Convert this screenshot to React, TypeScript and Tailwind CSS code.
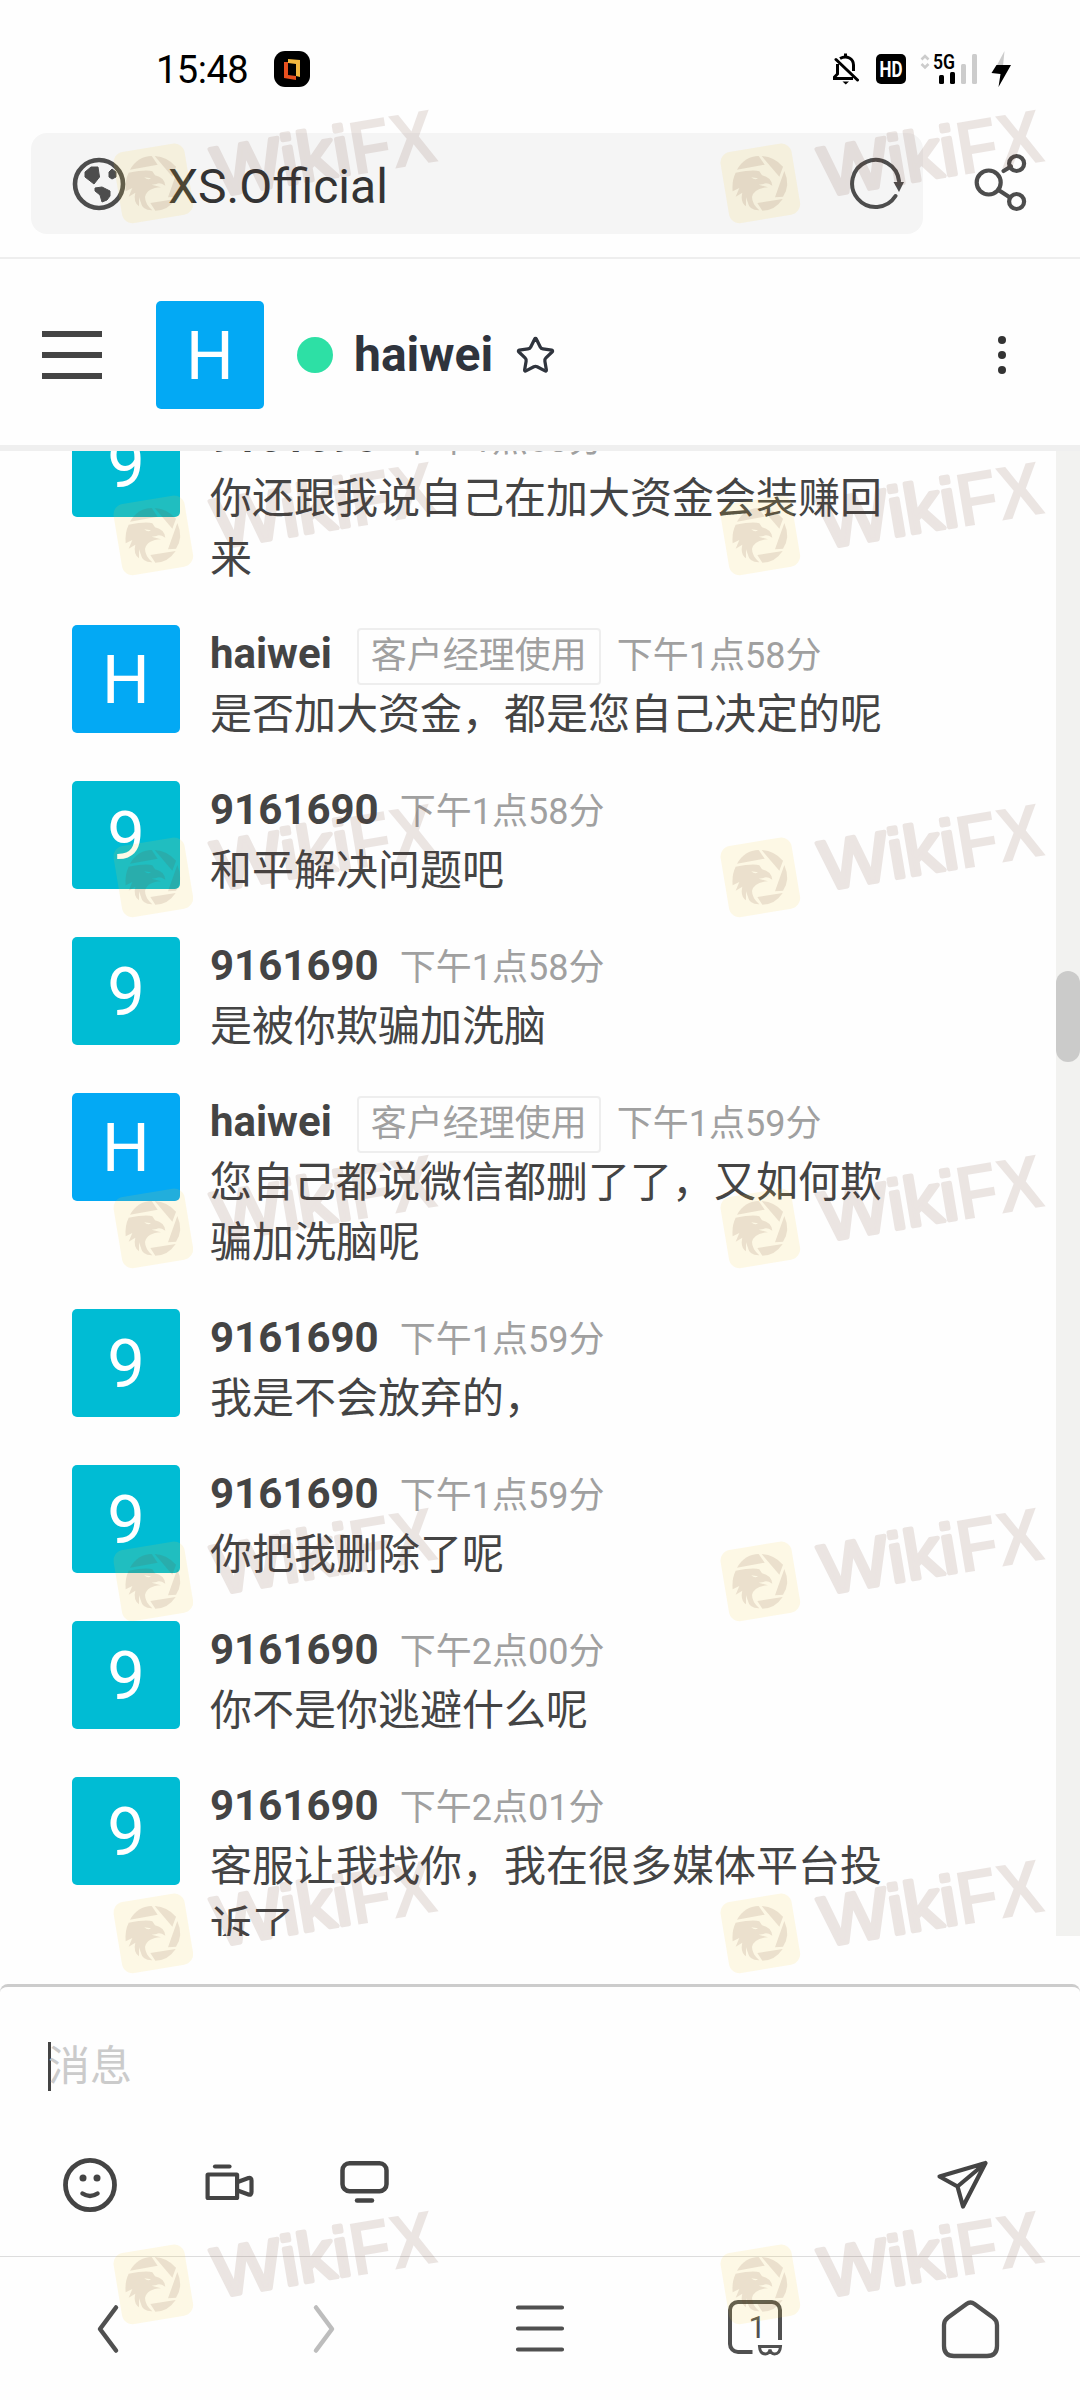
import React from "react";
import { Star } from "lucide-react";
import { clsx } from "clsx";

interface Message {
  id: string;
  author: string;
  role?: string;
  time: string;
  text: string;
}

const MESSAGES: Message[] = [
  { id: "m1", author: "9161690", time: "下午1点58分", text: "你还跟我说自己在加大资金会装赚回来" },
  { id: "m2", author: "haiwei", role: "客户经理使用", time: "下午1点58分", text: "是否加大资金，都是您自己决定的呢" },
  { id: "m3", author: "9161690", time: "下午1点58分", text: "和平解决问题吧" },
  { id: "m4", author: "9161690", time: "下午1点58分", text: "是被你欺骗加洗脑" },
  { id: "m5", author: "haiwei", role: "客户经理使用", time: "下午1点59分", text: "您自己都说微信都删了了，又如何欺骗加洗脑呢" },
  { id: "m6", author: "9161690", time: "下午1点59分", text: "我是不会放弃的，" },
  { id: "m7", author: "9161690", time: "下午1点59分", text: "你把我删除了呢" },
  { id: "m8", author: "9161690", time: "下午2点00分", text: "你不是你逃避什么呢" },
  { id: "m9", author: "9161690", time: "下午2点01分", text: "客服让我找你，我在很多媒体平台投诉了" },
];

const WATERMARK_ROWS = [102, 454, 796, 1147, 1500, 1852, 2203];
const WATERMARK_COLS = [92.5, 700];

function Avatar({ name }: { name: string }) {
  const letter = name[0].toUpperCase();
  return (
    <div
      className={clsx(
        "flex size-[108px] shrink-0 items-center justify-center rounded-[5px] pt-[2px] text-[67px] leading-none text-white",
        letter === "H" ? "bg-[#03a9f4]" : "bg-[#00bcd4]"
      )}
    >
      {letter}
    </div>
  );
}

function StatusBar() {
  return (
    <div className="flex h-[133px] shrink-0 items-center pt-[5px] pl-[156px] pr-[68px] text-black">
      <span className="w-[118px] pt-[1px] text-[38px] leading-none tracking-[-0.5px]">15:48</span>
      <svg width="36" height="36" viewBox="0 0 36 36">
        <rect width="36" height="36" rx="11" fill="#000" />
        <path d="M14 8 L26 9 V26 L22 25 V13 L14 12 Z" fill="#f3b73f" />
        <path d="M10 11 H14 V24 L22 25 V29 L10 27 Z" fill="#e8501f" />
      </svg>
      <svg className="ml-auto" width="27" height="32" viewBox="0 0 27 32" fill="none" stroke="#000" strokeWidth="3">
        <path d="M13.5 0.5 V4 M8 5.5 C15 1.5 21.5 6 21.5 12 V18 M5.5 11 V21 L2.5 24 V25.5 H21" />
        <path d="M4 6.5 L25.5 27" strokeLinecap="round" />
        <path d="M10.5 28.5 H17 L13.8 31.5 Z" fill="#000" stroke="none" />
      </svg>
      <svg className="ml-[17px] overflow-visible" width="30" height="30" viewBox="0 0 30 30">
        <rect width="30" height="30" rx="5" fill="#000" />
        <text x="3.5" y="23" fill="#fff" fontSize="22" fontWeight="700" textLength="23" lengthAdjust="spacingAndGlyphs">HD</text>
      </svg>
      <svg className="ml-[14px] overflow-visible" width="58" height="32" viewBox="0 0 58 32">
        <path d="M1.5 6.5 L5 3 L8.5 6.5 M1.5 11 L5 14.5 L8.5 11" fill="none" stroke="#ccc" strokeWidth="2.6" />
        <text x="13" y="16" fontSize="20" fontWeight="600" textLength="22" lengthAdjust="spacingAndGlyphs">5G</text>
        <rect x="19" y="22" width="5" height="9" rx="1.5" />
        <rect x="30" y="19" width="5" height="12" rx="1.5" />
        <rect x="41" y="11" width="5" height="20" rx="1.5" fill="#ccc" />
        <rect x="52" y="1" width="5" height="30" rx="1.5" fill="#ccc" />
      </svg>
      <svg className="ml-[13px]" width="21" height="36" viewBox="0 0 21 36">
        <path d="M13.5 0 L12 15 H5.5 Z" fill="#ccc" />
        <path d="M5.5 14 H20 L7.5 36 L9.5 23 L0.5 22 Z" fill="#000" />
      </svg>
    </div>
  );
}

function AddressBar() {
  return (
    <div className="flex h-[126px] shrink-0 items-start border-b-2 border-[#eeeeee] pl-[31px]">
      <div className="flex h-[101px] w-[892px] items-center rounded-[16px] bg-[#f5f5f5] pl-[41px] pr-[19px]">
        <svg width="54" height="54" viewBox="0 0 54 54">
          <circle cx="27" cy="27" r="24" fill="none" stroke="#4d4d4d" strokeWidth="4.6" />
          <g fill="#4d4d4d" stroke="#4d4d4d" strokeLinejoin="round">
            <path d="M13 15 L19 10 L26 10 L27.5 20 L22 27 L13 20 Z" />
            <path d="M23 31 L30 30 L38 34 L38 39 L35 43 L30 45 L28 38 L23 34 Z" />
            <path d="M37 15 L40 12 L44 15 L44 20 L40 22 L37 20 Z" />
          </g>
        </svg>
        <span className="ml-[42px] pt-[6px] text-[48px] leading-none text-[#333333]">XS.Official</span>
        <svg className="ml-auto" width="54" height="54" viewBox="0 0 54 54">
          <path d="M45.5 39 A23.5 23.5 0 1 1 49 24" fill="none" stroke="#4d4d4d" strokeWidth="4" strokeLinecap="round" />
          <path d="M43.5 25 H54 L49 35 Z" fill="#4d4d4d" />
        </svg>
      </div>
      <svg className="ml-[51px] mt-[19px]" width="54" height="60" viewBox="0 0 54 60" fill="none" stroke="#4d4d4d" strokeWidth="4.2">
        <circle cx="14.7" cy="30.5" r="12" />
        <circle cx="42.6" cy="11.5" r="7.5" />
        <circle cx="42.6" cy="49.5" r="7.5" />
        <path d="M29.5 19 L37 14.5 M24.5 38 L36 45.5" strokeLinecap="round" />
      </svg>
    </div>
  );
}

function ChatHeader() {
  return (
    <header className="flex h-[192px] shrink-0 items-center border-b-[6px] border-[#efefef] pl-[42px] pr-[74px] pt-[6px]">
      <div className="flex w-[60px] flex-col gap-[15px]">
        <div className="h-[6px] bg-[#444444]" />
        <div className="h-[6px] bg-[#444444]" />
        <div className="h-[6px] bg-[#444444]" />
      </div>
      <div className="ml-[54px]">
        <Avatar name="haiwei" />
      </div>
      <div className="ml-[33px] size-[36px] rounded-full bg-[#2de0a5]" />
      <h1 className="ml-[21px] text-[48px] font-bold leading-none text-[#2f343d]">haiwei</h1>
      <Star className="ml-[22px] text-[#2f343d]" size={41} strokeWidth={1.9} />
      <div className="ml-auto flex flex-col gap-[7px]">
        <div className="size-2 rounded-full bg-[#333333]" />
        <div className="size-2 rounded-full bg-[#333333]" />
        <div className="size-2 rounded-full bg-[#333333]" />
      </div>
    </header>
  );
}

function MessageRow({ author, role, time, text }: Message) {
  return (
    <li className="flex pb-[18px] pt-[18px]">
      <Avatar name={author} />
      <div className="ml-[30px] w-[690px]">
        <div className="flex h-[60px] items-baseline whitespace-nowrap text-[36px] text-[#a0a0a0]">
          <span className="text-[42px] font-bold leading-[58px] text-[#444444]">{author}</span>
          {role && (
            <span className="ml-[25px] rounded-[4px] border-2 border-[#eeeeee] px-3 leading-[53px]">
              {role}
            </span>
          )}
          <span className={clsx("leading-[58px]", role ? "ml-4" : "ml-[21px]")}>{time}</span>
        </div>
        <p className="text-[42px] leading-[60px] text-[#444444]">{text}</p>
      </div>
    </li>
  );
}

function MessageList() {
  return (
    <div className="flex h-[1485px] shrink-0 overflow-hidden">
      <ul className="-mt-[60px] flex-1 pl-[72px]">
        {MESSAGES.map((message) => (
          <MessageRow key={message.id} {...message} />
        ))}
      </ul>
      <div className="w-6 bg-[#f2f2f0] pt-[520px]">
        <div className="h-[91px] rounded-full bg-[#cbcbca]" />
      </div>
    </div>
  );
}

function Composer() {
  return (
    <div className="mt-12 flex h-[272px] shrink-0 flex-col rounded-t-[8px] border-t-[3px] border-[#cccccc] pt-[55px]">
      <div className="flex h-[49px] items-center pl-12">
        <div className="h-[49px] w-[3px] bg-[#444444]" />
        <span className="-ml-[3px] text-[42px] leading-[49px] text-[#cbcbcb]">消息</span>
      </div>
      <div className="mt-[65px] flex items-start pl-[63px] pr-[89px] text-[#444444]">
        <svg width="54" height="58" viewBox="0 0 54 58" fill="none" stroke="currentColor">
          <ellipse cx="27" cy="29" rx="24.5" ry="24.7" strokeWidth="4.8" />
          <circle cx="20" cy="22" r="3.5" fill="currentColor" stroke="none" />
          <circle cx="34" cy="22" r="3.5" fill="currentColor" stroke="none" />
          <path d="M19.5 37.5 Q27 42.5 34.5 37.5" strokeWidth="4.5" strokeLinecap="round" />
        </svg>
        <svg className="ml-[86px] mt-[6px]" width="54" height="42" viewBox="0 0 54 42" fill="none" stroke="currentColor" strokeWidth="4.2" strokeLinecap="round" strokeLinejoin="round">
          <path d="M12 4.5 H26.5" />
          <rect x="4.6" y="12.5" width="29.5" height="23.5" rx="0.5" />
          <path d="M36 19.5 L45.5 16 Q48.5 15.5 48.5 18.5 V30 Q48.5 33.5 45.5 32.5 L36 29" />
        </svg>
        <svg className="ml-[81px] mt-[3px]" width="54" height="48" viewBox="0 0 54 48" fill="none" stroke="currentColor" strokeWidth="4.5" strokeLinecap="round">
          <rect x="4.5" y="4.2" width="44" height="28" rx="7" />
          <path d="M19 41.5 H34" />
        </svg>
        <svg className="ml-auto mt-[3px]" width="56" height="52" viewBox="0 0 56 52" fill="none" stroke="currentColor" strokeWidth="4.2" strokeLinecap="round" strokeLinejoin="round">
          <path d="M50.5 4 L4.5 17.5 L22.5 27.5 L28 47.5 Z L22.5 27.5" />
        </svg>
      </div>
    </div>
  );
}

function BrowserNav() {
  return (
    <nav className="flex h-[144px] shrink-0 items-center border-t border-[#dddddd] text-[#505050]">
      <div className="flex flex-1 justify-center">
        <svg width="24" height="52" viewBox="0 0 24 52" fill="none" stroke="currentColor" strokeWidth="4.5" strokeLinecap="round" strokeLinejoin="round">
          <path d="M20 4.5 L4 26 L20 47.5" />
        </svg>
      </div>
      <div className="flex flex-1 justify-center text-[#bdbdbd]">
        <svg width="24" height="52" viewBox="0 0 24 52" fill="none" stroke="currentColor" strokeWidth="4.5" strokeLinecap="round" strokeLinejoin="round">
          <path d="M4 4.5 L20 26 L4 47.5" />
        </svg>
      </div>
      <div className="flex flex-1 justify-center">
        <svg width="52" height="52" viewBox="0 0 52 52" fill="none" stroke="currentColor" strokeWidth="4.2" strokeLinecap="round">
          <path d="M4 4.5 H48 M4 25.5 H48 M4 46.5 H48" />
        </svg>
      </div>
      <div className="flex flex-1 justify-center">
        <svg className="overflow-visible" width="60" height="62" viewBox="0 0 60 62" fill="none" stroke="currentColor" strokeWidth="4">
          <path d="M54 42 V12 A8 8 0 0 0 46 4 H12 A8 8 0 0 0 4 12 V46 A8 8 0 0 0 12 54 H26.5" />
          <text x="22.5" y="40" fill="currentColor" stroke="none" fontSize="31">1</text>
          <path d="M33.5 48.5 H54.5 Q54 56 48.5 56 Q45 56 44 51.5 Q43 56 39.5 56 Q34 56 33.5 48.5 Z" strokeWidth="3" />
        </svg>
      </div>
      <div className="flex flex-1 justify-center">
        <svg width="62" height="62" viewBox="0 0 62 62" fill="none" stroke="currentColor" strokeWidth="4.3">
          <path d="M25.5 6 Q29.5 3 33.5 6 L52 19.5 Q56 22.5 56 27 V48 Q56 58 46 58 H13 Q3 58 3 48 V27 Q3 22.5 7 19.5 Z" />
        </svg>
      </div>
    </nav>
  );
}

function Watermark({ left, top }: { left: number; top: number }) {
  return (
    <svg className="absolute h-[140px] w-[380px] overflow-visible" style={{ left, top }} viewBox="0 0 1140 420">
      <rect x="73" y="136" width="216" height="216" rx="32" transform="rotate(-9.5 181 244)" fill="#f5cd3c" fillOpacity="0.13" />
      {/* shutter blades, then the eagle head */}
      <g fill="#683625" fillOpacity="0.12">
        <path d="M111 203 Q134 163 176 162 L194 188 Z" />
        <path d="M185 162 Q224 165 249 194 L238 224 Z" />
        <path d="M253 207 Q272 250 249 284 L225 286 Z" />
        <path d="M248 291 Q225 326 187 326 L172 303 Z" />
        <path d="M107 212 Q160 202 178 208 L186 220 Q214 226 217 251 Q200 240 190 246 L176 248 L204 256 Q162 258 156 285 Q156 306 178 325 Q148 326 143 300 L138 286 L138 313 Q120 300 127 272 L107 284 L118 258 L98 268 Q95 236 107 212 Z M154 226 Q164 236 174 229 Z" fillRule="evenodd" />
      </g>
      <g transform="translate(800 217) rotate(-9.5)" opacity="0.12" fill="#683625" className="font-['Liberation_Sans',sans-serif]">
        <text x="-432" y="-6" fontSize="208" textLength="414" lengthAdjust="spacingAndGlyphs" stroke="#683625" strokeWidth="13" strokeLinejoin="round">Wiki</text>
        <text x="-17" y="0" fontSize="228" fontWeight="700" textLength="259" lengthAdjust="spacingAndGlyphs">FX</text>
      </g>
    </svg>
  );
}

export default function App() {
  return (
    <div className="relative flex h-[2400px] w-[1080px] flex-col overflow-hidden bg-[#fefefe] font-['Roboto','Noto_Sans_CJK_SC',sans-serif]">
      <StatusBar />
      <AddressBar />
      <ChatHeader />
      <MessageList />
      <Composer />
      <BrowserNav />
      <div className="pointer-events-none absolute inset-0">
        {WATERMARK_ROWS.map((top) =>
          WATERMARK_COLS.map((left) => <Watermark key={`${top}-${left}`} left={left} top={top} />)
        )}
      </div>
    </div>
  );
}
